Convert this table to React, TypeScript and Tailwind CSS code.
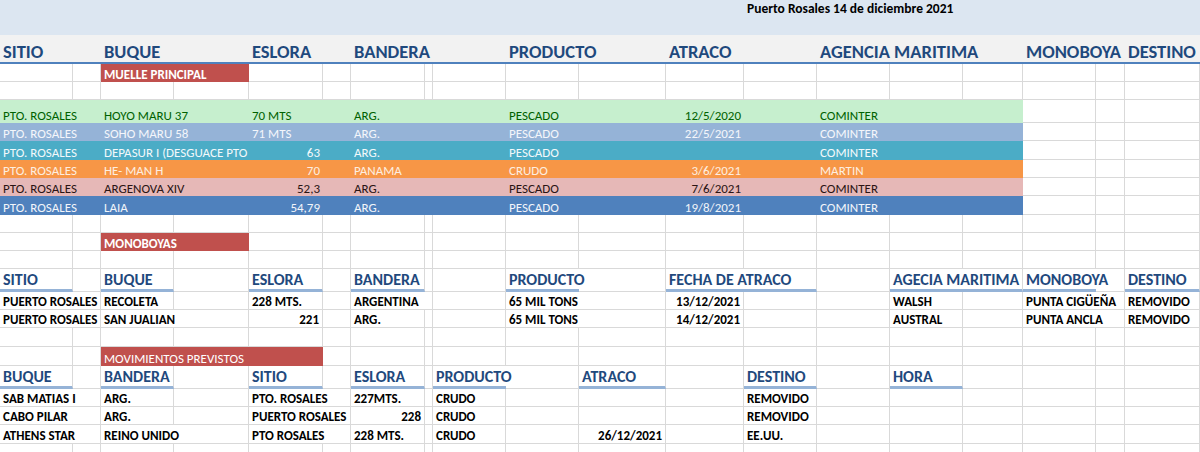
import React from 'react';

interface Cell {
    c: number; // columna inicial (1 = A)
    s?: number; // cuántas columnas ocupa
    t: string;
    cls?: string;
    r?: boolean; // alineado a la derecha
    u?: boolean; // subrayado del encabezado
    o?: boolean; // el texto desborda a la celda vecina
    bg?: string; // relleno propio (etiquetas rojas)
}

interface Row {
    h: string;
    cells: Cell[];
    fill?: string;
    fillTo?: number;
    lines?: boolean;
    text?: string;
    extra?: string;
}

const COLS =
    'grid grid-cols-[73px_28px_73px_75px_74px_28px_74px_8px_73px_73px_87px_78px_73px_73px_73px_60px_73px_29px_75px]';

const SPAN: { [n: number]: string } = {
    1: '',
    2: 'col-span-2',
    3: 'col-span-3',
    4: 'col-span-4',
    7: 'col-span-7',
};

const H1 = 'text-[18.5px] font-bold text-[#1f497d]';
const H2 = 'text-[16px] font-bold text-[#1f497d]';
const D = 'text-[13px]';
const B = 'text-[13px] font-bold text-black';
const RED = 'bg-[#c0504d] text-white text-[13px]';

const empty = (h: string): Row => ({ h, cells: [], lines: true });

const muelle = (bg: string, text: string, h: string, v: string[]): Row => ({
    h,
    fill: bg,
    fillTo: 16,
    lines: true,
    text,
    cells: [
        { c: 1, s: 2, t: v[0], cls: D },
        { c: 3, s: 2, t: v[1], cls: D },
        { c: 5, t: v[2], cls: D, r: v[3] === 'r' },
        { c: 7, t: v[4], cls: D },
        { c: 10, t: v[5], cls: D },
        { c: 12, t: v[6], cls: D, r: true },
        { c: 14, s: 2, t: v[7], cls: D },
    ],
});

const rows: Row[] = [
    {
        h: 'h-[16px]',
        fill: 'bg-[#dce6f1]',
        fillTo: 19,
        cells: [{ c: 13, s: 7, t: 'Puerto Rosales 14 de diciembre 2021', cls: 'text-[13.5px] font-bold text-black' }],
    },
    { h: 'h-[19px]', fill: 'bg-[#dce6f1]', fillTo: 19, cells: [] },
    {
        h: 'h-[29px]',
        fill: 'bg-[#f2f2f2]',
        fillTo: 19,
        extra: 'border-b-2 border-[#4f81bd]',
        cells: [
            { c: 1, s: 2, t: 'SITIO', cls: H1 },
            { c: 3, s: 2, t: 'BUQUE', cls: H1 },
            { c: 5, s: 2, t: 'ESLORA', cls: H1 },
            { c: 7, s: 3, t: 'BANDERA', cls: H1 },
            { c: 10, s: 2, t: 'PRODUCTO', cls: H1 },
            { c: 12, s: 2, t: 'ATRACO', cls: H1 },
            { c: 14, s: 3, t: 'AGENCIA MARITIMA', cls: H1 },
            { c: 17, s: 2, t: 'MONOBOYA', cls: H1 },
            { c: 19, t: 'DESTINO', cls: H1 },
        ],
    },
    { h: 'h-[18px]', lines: true, cells: [{ c: 3, s: 2, t: 'MUELLE PRINCIPAL', cls: 'font-bold', bg: RED }] },
    empty('h-[18px]'),
    muelle('bg-[#c6efce]', 'text-[#006100]', 'h-[23px]', [
        'PTO. ROSALES', 'HOYO MARU 37', '70 MTS', 'l', 'ARG.', 'PESCADO', '12/5/2020', 'COMINTER',
    ]),
    muelle('bg-[#95b3d7]', 'text-[#f4f6fb]', 'h-[18px]', [
        'PTO. ROSALES', 'SOHO MARU 58', '71 MTS', 'l', 'ARG.', 'PESCADO', '22/5/2021', 'COMINTER',
    ]),
    muelle('bg-[#4bacc6]', 'text-[#f2f9fb]', 'h-[19px]', [
        'PTO. ROSALES', 'DEPASUR I (DESGUACE PTO', '63', 'r', 'ARG.', 'PESCADO', '', 'COMINTER',
    ]),
    muelle('bg-[#f79646]', 'text-[#fdeee0]', 'h-[18px]', [
        'PTO. ROSALES', 'HE- MAN H', '70', 'r', 'PANAMA', 'CRUDO', '3/6/2021', 'MARTIN',
    ]),
    muelle('bg-[#e6b8b7]', 'text-[#2a1414]', 'h-[18px]', [
        'PTO. ROSALES', 'ARGENOVA XIV', '52,3', 'r', 'ARG.', 'PESCADO', '7/6/2021', 'COMINTER',
    ]),
    muelle('bg-[#4f81bd]', 'text-[#f2f5fa]', 'h-[19px]', [
        'PTO. ROSALES', 'LAIA', '54,79', 'r', 'ARG.', 'PESCADO', '19/8/2021', 'COMINTER',
    ]),
    empty('h-[18px]'),
    { h: 'h-[18px]', lines: true, cells: [{ c: 3, s: 2, t: 'MONOBOYAS', cls: 'font-bold', bg: RED }] },
    empty('h-[18px]'),
    {
        h: 'h-[23px]',
        lines: true,
        cells: [
            { c: 1, t: 'SITIO', cls: H2, u: true },
            { c: 3, t: 'BUQUE', cls: H2, u: true },
            { c: 5, t: 'ESLORA', cls: H2, u: true },
            { c: 7, t: 'BANDERA', cls: H2, u: true },
            { c: 10, t: 'PRODUCTO', cls: H2, u: true, o: true },
            { c: 12, s: 2, t: 'FECHA DE ATRACO', cls: H2, u: true },
            { c: 15, s: 2, t: 'AGECIA MARITIMA', cls: H2, u: true },
            { c: 17, t: 'MONOBOYA', cls: H2, u: true, o: true },
            { c: 19, t: 'DESTINO', cls: H2, u: true },
        ],
    },
    {
        h: 'h-[18px]',
        lines: true,
        cells: [
            { c: 1, s: 2, t: 'PUERTO ROSALES', cls: B },
            { c: 3, t: 'RECOLETA', cls: B },
            { c: 5, t: '228 MTS.', cls: B },
            { c: 7, s: 2, t: 'ARGENTINA', cls: B },
            { c: 10, s: 2, t: '65 MIL TONS', cls: B },
            { c: 12, t: '13/12/2021', cls: B, r: true },
            { c: 15, t: 'WALSH', cls: B },
            { c: 17, s: 2, t: 'PUNTA CIGÜEÑA', cls: B },
            { c: 19, t: 'REMOVIDO', cls: B },
        ],
    },
    {
        h: 'h-[18px]',
        lines: true,
        cells: [
            { c: 1, s: 2, t: 'PUERTO ROSALES', cls: B },
            { c: 3, s: 2, t: 'SAN JUALIAN', cls: B },
            { c: 5, t: '221', cls: B, r: true },
            { c: 7, t: 'ARG.', cls: B },
            { c: 10, s: 2, t: '65 MIL TONS', cls: B },
            { c: 12, t: '14/12/2021', cls: B, r: true },
            { c: 15, t: 'AUSTRAL', cls: B },
            { c: 17, s: 2, t: 'PUNTA ANCLA', cls: B },
            { c: 19, t: 'REMOVIDO', cls: B },
        ],
    },
    empty('h-[19px]'),
    { h: 'h-[19px]', lines: true, cells: [{ c: 3, s: 3, t: 'MOVIMIENTOS PREVISTOS', bg: RED }] },
    {
        h: 'h-[23px]',
        lines: true,
        cells: [
            { c: 1, t: 'BUQUE', cls: H2, u: true },
            { c: 3, t: 'BANDERA', cls: H2, u: true },
            { c: 5, t: 'SITIO', cls: H2, u: true },
            { c: 7, t: 'ESLORA', cls: H2, u: true },
            { c: 9, t: 'PRODUCTO', cls: H2, u: true, o: true },
            { c: 11, t: 'ATRACO', cls: H2, u: true },
            { c: 13, t: 'DESTINO', cls: H2, u: true },
            { c: 15, t: 'HORA', cls: H2, u: true },
        ],
    },
    {
        h: 'h-[18px]',
        lines: true,
        cells: [
            { c: 1, s: 2, t: 'SAB MATIAS I', cls: B },
            { c: 3, t: 'ARG.', cls: B },
            { c: 5, s: 2, t: 'PTO. ROSALES', cls: B },
            { c: 7, t: '227MTS.', cls: B },
            { c: 9, t: 'CRUDO', cls: B },
            { c: 13, t: 'REMOVIDO', cls: B },
        ],
    },
    {
        h: 'h-[18px]',
        lines: true,
        cells: [
            { c: 1, s: 2, t: 'CABO PILAR', cls: B },
            { c: 3, t: 'ARG.', cls: B },
            { c: 5, s: 2, t: 'PUERTO ROSALES', cls: B },
            { c: 7, t: '228', cls: B, r: true },
            { c: 9, t: 'CRUDO', cls: B },
            { c: 13, t: 'REMOVIDO', cls: B },
        ],
    },
    {
        h: 'h-[19px]',
        lines: true,
        cells: [
            { c: 1, s: 2, t: 'ATHENS STAR', cls: B },
            { c: 3, s: 2, t: 'REINO UNIDO', cls: B },
            { c: 5, s: 2, t: 'PTO ROSALES', cls: B },
            { c: 7, t: '228 MTS.', cls: B },
            { c: 9, t: 'CRUDO', cls: B },
            { c: 11, t: '26/12/2021', cls: B, r: true },
            { c: 13, t: 'EE.UU.', cls: B },
        ],
    },
    empty('h-[18px]'),
];

function SheetRow({ row }: { row: Row }) {
    const out: React.ReactNode[] = [];
    let col = 1;
    while (col <= 19) {
        const cell = row.cells.find((x) => x.c === col);
        const span = cell?.s ?? 1;
        const filled = row.fillTo ? col <= row.fillTo : false;
        let cls = 'flex items-end whitespace-nowrap px-[3px] pb-[1px] leading-none ' + SPAN[span];
        cls += cell?.o ? ' relative z-10 overflow-visible' : ' overflow-hidden';
        if (cell?.bg) cls += ' ' + cell.bg;
        else if (filled) cls += ' ' + row.fill;
        else if (row.lines) cls += cell?.o ? ' border-b border-[#d9d9d9]' : ' border-r border-b border-[#d9d9d9]';
        if (cell?.u) cls += ' border-b-[3px] border-b-[#95b3d7]';
        if (cell?.r) cls += ' justify-end';
        if (row.text) cls += ' ' + row.text;
        out.push(
            <div key={col} className={cls}>
                {cell ? <span className={cell.cls}>{cell.t}</span> : null}
            </div>
        );
        col += span;
    }
    return <div className={`${COLS} ${row.h} ${row.extra ?? ''}`}>{out}</div>;
}

export default function App() {
    return (
        <div className="w-[1200px] h-[452px] overflow-hidden bg-white font-['Carlito','Lato',sans-serif]">
            {rows.map((row, i) => (
                <SheetRow key={i} row={row} />
            ))}
        </div>
    );
}
